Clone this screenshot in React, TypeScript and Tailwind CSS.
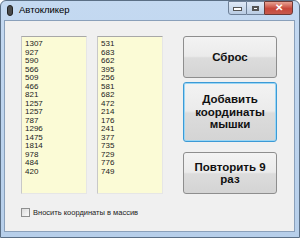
import React from 'react'

const left = [1307, 927, 590, 566, 509, 466, 821, 1257, 1257, 787, 1296, 1475, 1814, 978, 484, 420]
const right = [531, 683, 662, 395, 256, 581, 682, 472, 214, 176, 241, 377, 735, 729, 776, 749]

function List({ items }: { items: number[] }) {
  return (
    <div className="w-[66px] h-[158px] bg-[#fbfbd6] border border-t-[#a8a8a8] border-l-[#c8c8c8] border-r-[#e6e6e6] border-b-[#e6e6e6] pl-[3px] pt-[3px] text-[8px] leading-[8.5px] text-[#222]">
      {items.map((n, i) => (
        <div key={i}>{n}</div>
      ))}
    </div>
  )
}

function Btn({ children, focused, h }: { children: React.ReactNode; focused?: boolean; h: string }) {
  return (
    <div
      className={`w-[94px] ${h} rounded-[3px] border flex items-center justify-center text-center font-bold text-[11.5px] leading-[12.5px] text-[#111] bg-[linear-gradient(#f3f3f3_0%,#ebebeb_48%,#dcdcdc_52%,#d4d4d4_100%)] ${focused ? 'border-[#3c9ad6] shadow-[inset_0_0_0_1px_#9ad6f4]' : 'border-[#8e8e8e]'}`}
    >
      {children}
    </div>
  )
}

export default function App() {
  return (
    <div className="w-[300px] h-[238px] bg-[linear-gradient(#c4d9f1,#b7cfea)] border border-[#5b6f85] rounded-t-[6px] flex flex-col font-['Liberation_Sans',Arial,sans-serif] overflow-hidden">
      {/* Title bar */}
      <div className="h-[19px] flex items-start shrink-0">
        <div className="flex items-center h-[18px] pl-[3px]">
          <div className="w-[6px] h-[11px] rounded-[3px] bg-[#4a4a4a] border border-[#222] ml-[3px]" />
          <span className="ml-[6px] text-[9.5px] text-[#000]">Автокликер</span>
        </div>
        <div className="ml-auto mr-[6px] flex h-[14px]">
          <div className="w-[19px] border border-[#6d7f96] rounded-bl-[3px] bg-[linear-gradient(#dfe9f6,#b9cce3)] flex items-end justify-center pb-[3px]">
            <div className="w-[7px] h-[2px] bg-white border border-[#555] box-content" />
          </div>
          <div className="w-[17px] border-y border-[#6d7f96] bg-[linear-gradient(#dfe9f6,#b9cce3)] flex items-center justify-center">
            <div className="w-[7px] h-[5px] border-2 border-[#555] bg-white" />
          </div>
          <div className="w-[29px] border border-[#6d3a36] rounded-br-[3px] bg-[linear-gradient(#e8a393,#c7473a_55%,#c65a4d)] flex items-center justify-center">
            <span className="text-white font-bold text-[10px] leading-none">✕</span>
          </div>
        </div>
      </div>

      {/* Client area */}
      <div className="ml-[3px] mr-[4px] mb-[5px] flex-1 bg-[#f0f0f0] border border-[#8aa0ba] flex flex-col">
        <div className="flex pt-[15px] pl-[16px]">
          <List items={left} />
          <div className="w-[10px]" />
          <List items={right} />
          <div className="ml-[20px] flex flex-col">
            <Btn h="h-[42px]">Сброс</Btn>
            <div className="h-[4px]" />
            <Btn h="h-[60px]" focused>
              Добавить
              <br />
              координаты
              <br />
              мышки
            </Btn>
            <div className="h-[10px]" />
            <Btn h="h-[42px]">
              Повторить 9
              <br />
              раз
            </Btn>
          </div>
        </div>
        <div className="flex items-center pl-[16px] mt-[13px]">
          <div className="w-[9px] h-[9px] border border-[#8e8f8f] bg-[linear-gradient(135deg,#dcdcdc,#fafafa)]" />
          <span className="ml-[3px] text-[7.5px] text-[#222]">Вносить координаты в массив</span>
        </div>
      </div>
    </div>
  )
}
